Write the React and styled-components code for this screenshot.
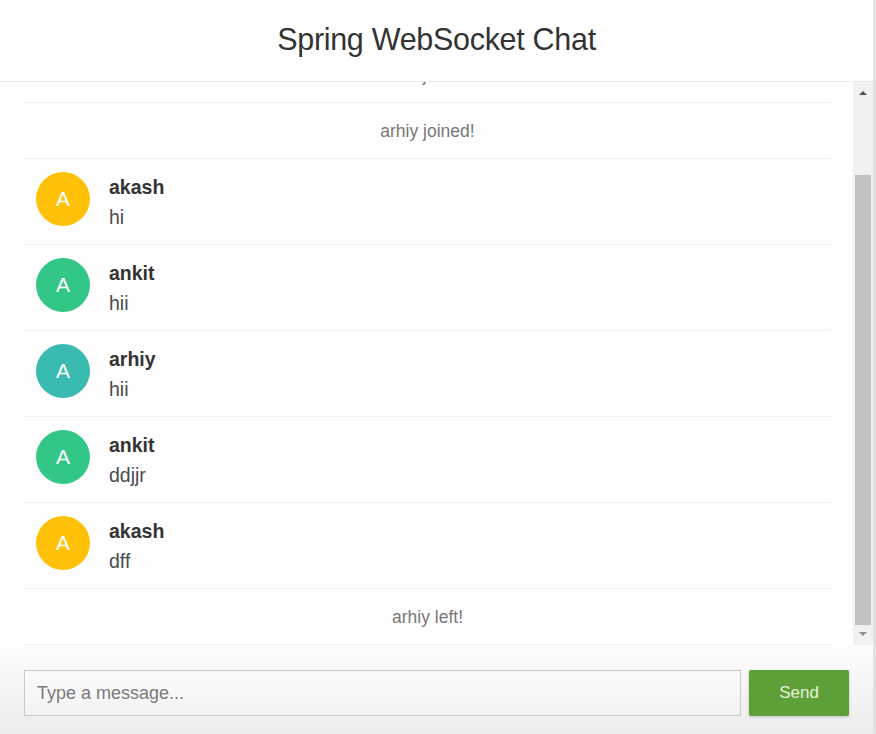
import React, { useLayoutEffect, useRef, useState } from "react";
import styled, { createGlobalStyle } from "styled-components";

const GlobalStyle = createGlobalStyle`
  html, body {
    margin: 0;
    padding: 0;
    height: 100%;
    background: #e2e2e2;
  }
  #root {
    height: 100%;
  }
  * {
    box-sizing: border-box;
  }
`;

const colors = {
  akash: "#ffc107",
  ankit: "#32c787",
  arhiy: "#39bbb0",
};

const messages = [
  { type: "JOIN", sender: "akash" },
  { type: "JOIN", sender: "ankit" },
  { type: "JOIN", sender: "arhiy" },
  { type: "CHAT", sender: "akash", content: "hi" },
  { type: "CHAT", sender: "ankit", content: "hii" },
  { type: "CHAT", sender: "arhiy", content: "hii" },
  { type: "CHAT", sender: "ankit", content: "ddjjr" },
  { type: "CHAT", sender: "akash", content: "dff" },
  { type: "LEAVE", sender: "arhiy" },
];

function App() {
  const listRef = useRef(null);
  const [thumb, setThumb] = useState({ top: 0, size: 1 });

  useLayoutEffect(() => {
    // keep the newest message in view and size the scrollbar thumb
    const el = listRef.current;
    if (!el) return;
    el.scrollTop = el.scrollHeight;
    setThumb({
      top: el.scrollTop / el.scrollHeight,
      size: el.clientHeight / el.scrollHeight,
    });
  }, []);

  return (
    <Page>
      <GlobalStyle />
      <Header>
        <Title>Spring WebSocket Chat</Title>
      </Header>
      <Body>
        <MessageList ref={listRef}>
          {messages.map((m, i) =>
            m.type === "CHAT" ? (
              <ChatItem key={i}>
                <Avatar color={colors[m.sender]}>{m.sender[0]}</Avatar>
                <Sender>{m.sender}</Sender>
                <Text>{m.content}</Text>
              </ChatItem>
            ) : (
              <EventItem key={i}>
                {m.sender} {m.type === "JOIN" ? "joined!" : "left!"}
              </EventItem>
            )
          )}
        </MessageList>
        <Scrollbar>
          <ArrowButton up />
          <Track>
            <Thumb
              style={{
                top: `${thumb.top * 100}%`,
                height: `${thumb.size * 100}%`,
              }}
            />
          </Track>
          <ArrowButton />
        </Scrollbar>
      </Body>
      <Form onSubmit={(e) => e.preventDefault()}>
        <MessageInput placeholder="Type a message..." autoFocus />
        <SendButton type="submit">Send</SendButton>
      </Form>
    </Page>
  );
}

const Page = styled.div`
  display: flex;
  flex-direction: column;
  height: 100vh;
  width: 873px;
  background: #fff;
  font-family: "Liberation Sans", Arial, sans-serif;
`;

const Header = styled.div`
  display: flex;
  align-items: center;
  justify-content: center;
  height: 82px;
  flex-shrink: 0;
  border-bottom: 1px solid #ececec;
  background: #fff;
`;

const Title = styled.h2`
  margin: 0 0 4px;
  font-size: 30.5px;
  line-height: 36px;
  font-weight: normal;
  color: #333;
  letter-spacing: -0.3px;
`;

const Body = styled.div`
  display: flex;
  flex: 1;
  min-height: 0;
  background: #fefefe;
`;

const MessageList = styled.ul`
  flex: 1;
  margin: 0;
  padding: 0 22px 0 24px;
  list-style: none;
  overflow: hidden;
`;

const Scrollbar = styled.div`
  display: flex;
  flex-direction: column;
  width: 20px;
  flex-shrink: 0;
  background: #f1f1f1;
`;

const ArrowButton = styled.div`
  display: flex;
  align-items: center;
  justify-content: center;
  height: 20px;
  flex-shrink: 0;

  &::before {
    content: "";
    border-left: 4px solid transparent;
    border-right: 4px solid transparent;
    ${(p) =>
      p.up
        ? "border-bottom: 4px solid #505050; margin-top: 2px;"
        : "border-top: 4px solid #8f8f8f; margin-bottom: 2px;"}
  }
`;

const Track = styled.div`
  position: relative;
  flex: 1;
`;

const Thumb = styled.div`
  position: absolute;
  left: 2px;
  right: 2px;
  background: #c1c1c1;
`;

const Item = styled.li`
  margin: 0;
  padding: 12.5px 25px;
  line-height: 30px;
  border-bottom: 1px solid #f2f2f2;
`;

const EventItem = styled(Item)`
  text-align: center;
  font-size: 17.5px;
  color: #777;
`;

const ChatItem = styled(Item)`
  position: relative;
  padding-left: 85px;
  font-size: 19.5px;
`;

const Avatar = styled.i`
  position: absolute;
  left: 12px;
  top: 13px;
  width: 54px;
  height: 54px;
  border-radius: 50%;
  background: ${(p) => p.color};
  color: #fff;
  font-style: normal;
  font-size: 21px;
  line-height: 54px;
  text-align: center;
  text-transform: uppercase;
`;

const Sender = styled.span`
  display: block;
  font-weight: bold;
  color: #333;
`;

const Text = styled.p`
  margin: 0;
  color: #4a4c50;
`;

const Form = styled.form`
  display: flex;
  gap: 8px;
  flex-shrink: 0;
  height: 89px;
  padding: 25px 24px 18px;
  background: linear-gradient(#fdfdfd, #ececec);
`;

const MessageInput = styled.input`
  flex: 1;
  height: 46px;
  padding: 0 12px;
  border: 1px solid #c9c9c9;
  background: linear-gradient(#fbfbfb, #f3f3f3);
  font-family: "Liberation Sans", Arial, sans-serif;
  font-size: 18px;
  color: #333;
  outline: none;

  &::placeholder {
    color: #7a7a7a;
  }
`;

const SendButton = styled.button`
  width: 100px;
  height: 46px;
  border: none;
  border-radius: 2px;
  background: #5f9f37;
  box-shadow: 0 1px 3px rgba(0, 0, 0, 0.2);
  color: #e6f3da;
  font-family: "Liberation Sans", Arial, sans-serif;
  font-size: 17px;
  cursor: pointer;
`;

export default App;
